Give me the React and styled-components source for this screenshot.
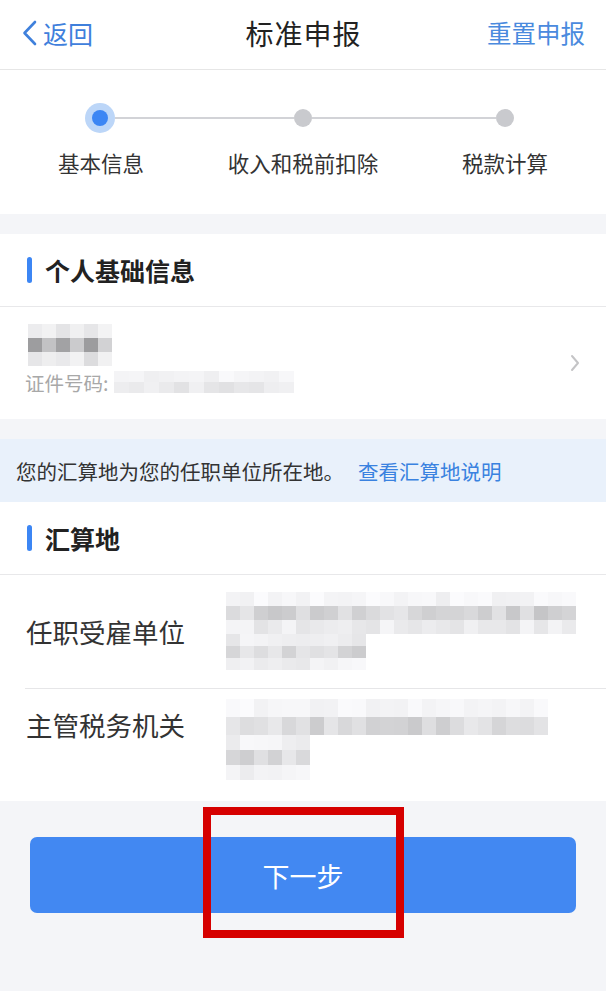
import React from 'react';
import styled, { createGlobalStyle } from 'styled-components';

const GlobalStyle = createGlobalStyle`
  html, body {
    margin: 0;
    padding: 0;
    background: #f4f5f8;
  }
  body {
    font-family: 'Noto Sans CJK SC', 'Noto Sans', sans-serif;
    color: #333;
  }
`;

const Page = styled.div`
  width: 606px;
  min-height: 991px;
  background: #f4f5f8;
  display: flex;
  flex-direction: column;
`;

const Header = styled.div`
  height: 70px;
  background: #fff;
  border-bottom: 1px solid #e6e6e6;
  display: grid;
  grid-template-columns: 1fr auto 1fr;
  align-items: center;
  padding: 0 21px 4px 22px;
  box-sizing: border-box;
`;

const BackLink = styled.div`
  display: flex;
  align-items: center;
  gap: 6px;
  color: #3f80dc;
  font-size: 25px;
  justify-self: start;
`;

const Title = styled.div`
  font-size: 28px;
  color: #222;
  letter-spacing: 1px;
`;

const HeaderAction = styled.div`
  justify-self: end;
  color: #4a8ade;
  font-size: 24.5px;
`;

const Steps = styled.div`
  background: #fff;
  height: 144px;
  padding-top: 33px;
  box-sizing: border-box;
`;

const Track = styled.div`
  display: flex;
  align-items: center;
  height: 30px;
  padding-left: 85px;
`;

const Dot = styled.div`
  flex: none;
  width: ${(p) => (p.$active ? '16px' : '18px')};
  height: ${(p) => (p.$active ? '16px' : '18px')};
  margin: ${(p) => (p.$active ? '7px' : '0')};
  border-radius: 50%;
  background: ${(p) => (p.$active ? '#3c86f4' : '#c9cace')};
  box-shadow: ${(p) => (p.$active ? '0 0 0 7px #bcd6f8' : 'none')};
`;

const Line = styled.div`
  flex: none;
  width: ${(p) => p.$w}px;
  height: 2px;
  background: #d2d3d7;
`;

const StepLabels = styled.div`
  display: grid;
  grid-template-columns: repeat(3, 1fr);
  margin-top: 14px;
`;

const StepLabel = styled.div`
  text-align: center;
  font-size: 21.5px;
  color: #333;
`;

const Gap = styled.div`
  height: ${(p) => p.$h}px;
  background: #f4f5f8;
`;

const Card = styled.div`
  background: #fff;
`;

const SectionHeader = styled.div`
  height: 72px;
  display: flex;
  align-items: center;
  gap: 13px;
  padding-left: 27px;
  border-bottom: 1px solid #e8e8ea;
`;

const Bar = styled.div`
  width: 5px;
  height: 26px;
  border-radius: 3px;
  background: #3c86f4;
`;

const SectionTitle = styled.div`
  font-size: 25px;
  font-weight: 700;
  color: #222;
`;

const PersonRow = styled.div`
  height: 112px;
  display: flex;
  align-items: center;
  justify-content: space-between;
  padding: 0 26px 0 28px;
`;

const PersonInfo = styled.div`
  display: flex;
  flex-direction: column;
  gap: 2px;
  margin-top: -6px;
`;

const IdLine = styled.div`
  display: flex;
  align-items: center;
  gap: 6px;
  margin-left: -3px;
  font-size: 19.5px;
  color: #a8a8a8;
`;

const Notice = styled.div`
  height: 63px;
  background: #e9f1fb;
  display: flex;
  align-items: center;
  padding-left: 16px;
  font-size: 20.5px;
  color: #333;
`;

const NoticeLink = styled.span`
  color: #3a82e0;
  margin-left: 14px;
`;

const FieldRow = styled.div`
  display: flex;
  align-items: flex-start;
  min-height: ${(p) => p.$h}px;
  margin-left: 25px;
  border-bottom: ${(p) => (p.$divider ? '1px solid #e6e6e8' : 'none')};
  box-sizing: border-box;
`;

const FieldLabel = styled.div`
  width: 200px;
  flex: none;
  font-size: 26.5px;
  color: #333;
  padding-left: 1px;
  margin-top: ${(p) => p.$mt || 0}px;
`;

const FieldValue = styled.div`
  display: flex;
  flex-direction: column;
  padding-top: ${(p) => p.$pt || 0}px;
`;

const MosaicGrid = styled.div`
  display: grid;
  grid-template-columns: repeat(${(p) => p.$cols}, ${(p) => p.$cell}px);
  grid-auto-rows: ${(p) => p.$cellH || p.$cell}px;
`;

const Cell = styled.div`
  background: ${(p) => p.$shade};
`;

const Footer = styled.div`
  flex: 1;
  position: relative;
  background: #f4f5f8;
  padding: 36px 30px 0 30px;
`;

const NextButton = styled.button`
  width: 546px;
  height: 76px;
  border: none;
  border-radius: 7px;
  background: #4288f2;
  color: #fff;
  font-family: inherit;
  font-size: 27px;
  display: flex;
  align-items: center;
  justify-content: center;
`;

const Highlight = styled.div`
  position: absolute;
  left: 203px;
  top: 6px;
  width: 201px;
  height: 131px;
  box-sizing: border-box;
  border: 8px solid #d60000;
`;

const Chevron = () => (
  <svg width="15" height="26" viewBox="0 0 15 26" fill="none">
    <path d="M13 2 L2.5 13 L13 24" stroke="#3f80dc" strokeWidth="2.6" strokeLinecap="round" strokeLinejoin="round" />
  </svg>
);

const ChevronRight = () => (
  <svg width="10" height="18" viewBox="0 0 10 18" fill="none">
    <path d="M2 2 L8 9 L2 16" stroke="#c4c4c6" strokeWidth="2" strokeLinecap="round" strokeLinejoin="round" />
  </svg>
);

// deterministic gray shades for the blurred blocks
function makeShades(seed, count, min, max) {
  let s = seed;
  const out = [];
  for (let i = 0; i < count; i++) {
    s = (s * 9301 + 49297) % 233280;
    const v = Math.round(min + (s / 233280) * (max - min));
    out.push(`rgb(${v},${v},${v + 2})`);
  }
  return out;
}

function Mosaic({ rows, cell, cellH }) {
  const cols = rows[0].length;
  return (
    <MosaicGrid $cols={cols} $cell={cell} $cellH={cellH}>
      {rows.flatMap((r, ri) => r.map((c, ci) => <Cell key={`${ri}-${ci}`} $shade={c} />))}
    </MosaicGrid>
  );
}

const nameRows = [
  ['#ececee', '#f2f2f3', '#e4e4e6', '#f0f0f1', '#e6e6e8', '#f3f3f4'],
  ['#9d9d9f', '#c2c2c4', '#a2a2a4', '#cbcbcd', '#9c9c9e', '#d2d2d4'],
  ['#e6e6e8', '#eeeeef', '#e9e9eb', '#f2f2f3', '#dcdcde', '#f1f1f2'],
];

const idRows = [
  makeShades(7, 12, 238, 250),
  makeShades(13, 12, 224, 242),
];

const employerRows = [
  makeShades(3, 25, 238, 252),
  makeShades(11, 25, 196, 232),
  makeShades(17, 25, 226, 246),
];
const employerRows2 = [
  makeShades(23, 10, 228, 246),
  makeShades(29, 10, 204, 232),
  makeShades(31, 10, 232, 248),
];
const officeRows = [
  makeShades(41, 23, 240, 251),
  makeShades(43, 23, 200, 232),
];
const officeRows2 = [
  makeShades(47, 6, 234, 248),
  makeShades(53, 6, 206, 232),
  makeShades(59, 6, 236, 250),
];

export default function App() {
  return (
    <Page>
      <GlobalStyle />
      <Header>
        <BackLink>
          <Chevron />
          返回
        </BackLink>
        <Title>标准申报</Title>
        <HeaderAction>重置申报</HeaderAction>
      </Header>

      <Steps>
        <Track>
          <Dot $active />
          <Line $w={179} />
          <Dot />
          <Line $w={184} />
          <Dot />
        </Track>
        <StepLabels>
          <StepLabel>基本信息</StepLabel>
          <StepLabel>收入和税前扣除</StepLabel>
          <StepLabel>税款计算</StepLabel>
        </StepLabels>
      </Steps>

      <Gap $h={20} />

      <Card>
        <SectionHeader>
          <Bar />
          <SectionTitle>个人基础信息</SectionTitle>
        </SectionHeader>
        <PersonRow>
          <PersonInfo>
            <Mosaic rows={nameRows} cell={14} />
            <IdLine>
              证件号码:
              <Mosaic rows={idRows} cell={15} cellH={11} />
            </IdLine>
          </PersonInfo>
          <ChevronRight />
        </PersonRow>
      </Card>

      <Gap $h={20} />

      <Notice>
        您的汇算地为您的任职单位所在地。
        <NoticeLink>查看汇算地说明</NoticeLink>
      </Notice>

      <Card>
        <SectionHeader>
          <Bar />
          <SectionTitle>汇算地</SectionTitle>
        </SectionHeader>
        <FieldRow $h={114} $divider>
          <FieldLabel $mt={37}>任职受雇单位</FieldLabel>
          <FieldValue $pt={17}>
            <Mosaic rows={employerRows} cell={14} />
            <Mosaic rows={employerRows2} cell={14} cellH={12} />
          </FieldValue>
        </FieldRow>
        <FieldRow $h={112}>
          <FieldLabel $mt={16}>主管税务机关</FieldLabel>
          <FieldValue $pt={10}>
            <Mosaic rows={officeRows} cell={14} cellH={18} />
            <Mosaic rows={officeRows2} cell={14} cellH={15} />
          </FieldValue>
        </FieldRow>
      </Card>

      <Footer>
        <NextButton>下一步</NextButton>
        <Highlight />
      </Footer>
    </Page>
  );
}
